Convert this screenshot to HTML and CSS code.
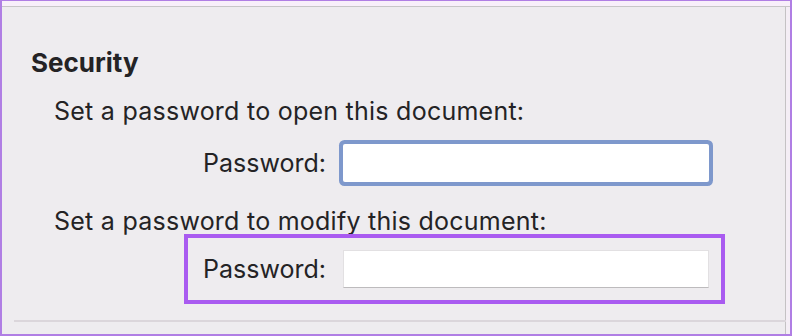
FILE: index.html
```html
<!DOCTYPE html>
<html lang="en">
<head>
<meta charset="utf-8">
<title>Security</title>
<link rel="stylesheet" href="styles.css">
</head>
<body>
<div class="window">
  <div class="title-strip"></div>
  <div class="panel">
    <h2 class="section-title">Security</h2>
    <p class="hint">Set a password to open this document:</p>
    <div class="field-row row-open">
      <label class="field-label">Password:</label>
      <div class="text-input is-focused"></div>
    </div>
    <p class="hint hint-modify">Set a password to modify this document:</p>
    <div class="highlight">
      <div class="field-row row-modify">
        <label class="field-label">Password:</label>
        <div class="text-input"></div>
      </div>
    </div>
    <div class="separator"></div>
  </div>
</div>
</body>
</html>
```

FILE: styles.css
```css
* { box-sizing: border-box; }
html, body { margin: 0; padding: 0; }
body {
  width: 792px;
  height: 336px;
  overflow: hidden;
  background: #eeecef;
  font-family: Inter, "Noto Sans", sans-serif;
  color: #242325;
}
.window {
  width: 792px;
  height: 336px;
  display: flex;
  flex-direction: column;
  border-left: 2px solid #b07ee4;
  border-top: 1px solid #b07ee4;
  border-bottom: 2px solid #b07ee4;
  border-right: 2px solid #b07ee4;
  background: #eeecef;
}
.title-strip {
  height: 6px;
  flex: none;
  background: #f8effa;
  border-bottom: 1px solid #c8c6c8;
}
.panel {
  flex: 1;
  padding-left: 29px;
  border-right: 4px solid #f4eef5;
  box-shadow: inset -1px 0 0 #c4c2c4;
  display: flex;
  flex-direction: column;
}
.section-title {
  margin: 41px 0 0 0;
  font-size: 26px;
  line-height: 30px;
  font-weight: 700;
}
.hint {
  margin: 18px 0 0 23px;
  font-size: 25px;
  line-height: 30px;
  font-weight: 400;
  letter-spacing: 0.25px;
}
.field-row {
  display: flex;
  align-items: center;
}
.field-label {
  width: 138px;
  text-align: right;
  font-size: 25px;
  line-height: 30px;
  margin-right: 17px;
  white-space: nowrap;
}
.text-input {
  flex: none;
  width: 366px;
  height: 38px;
  background: #ffffff;
  border: 1px solid #e2e0e2;
  border-bottom-color: #bdbbbd;
}
.text-input.is-focused {
  border: none;
  border-radius: 2px;
  box-shadow: 0 0 0 4px #7e98cc;
}
.row-open {
  margin: 18px 0 0 157px;
}
.hint-modify {
  margin-top: 24px;
}
.highlight {
  margin: -2px 0 0 153px;
  width: 541px;
  height: 70px;
  border: 4px solid #a95bf0;
  padding: 12px 0 0 0;
}
.separator {
  margin: 16px 0 0 -17px;
  height: 2px;
  background: #dbd6db;
}
```
